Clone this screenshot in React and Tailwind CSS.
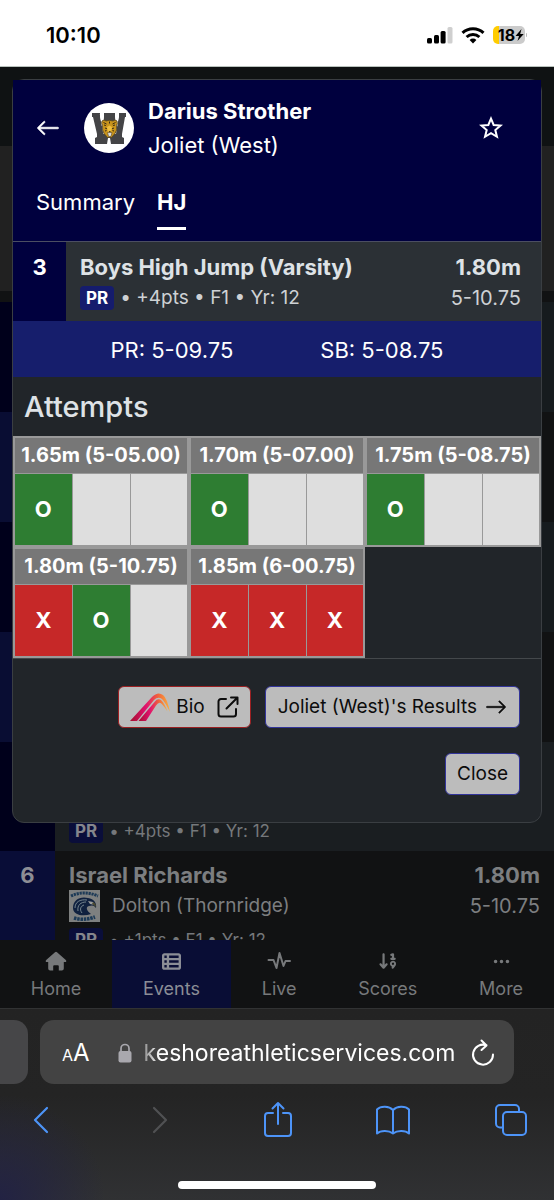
import React from "react";
import { BsArrowLeft, BsArrowRight, BsThreeDots } from "react-icons/bs";
import { FaTableList, FaArrowDown19 } from "react-icons/fa6";

const ATTEMPTS = [
  { height: "1.65m (5-05.00)", marks: ["O", "", ""] },
  { height: "1.70m (5-07.00)", marks: ["O", "", ""] },
  { height: "1.75m (5-08.75)", marks: ["O", "", ""] },
  { height: "1.80m (5-10.75)", marks: ["X", "O", ""] },
  { height: "1.85m (6-00.75)", marks: ["X", "X", "X"] },
];

const MARK_STYLE = {
  O: "bg-[#2e7d32]",
  X: "bg-[#c62828]",
  "": "bg-[#dedede]",
};

function StatusBar() {
  return (
    <header className="flex h-[67px] shrink-0 items-center justify-between border-b border-[#b9c2bd] bg-white pr-[27px] pl-[46px] text-black">
      <time className="pt-1 text-[22px] leading-7 font-semibold">10:10</time>
      <div className="flex items-center gap-2 pt-1">
        <svg width="26" height="18" viewBox="0 0 26 18" aria-label="Signal">
          <rect x="0" y="12" width="5" height="5.5" rx="1.5" />
          <rect x="7" y="9" width="5" height="8.5" rx="1.5" />
          <rect x="13.600" y="5" width="5" height="12.500" rx="1.500" />
          <rect x="20.500" y="1" width="5" height="16.500" rx="1.500" fill="#cfcfcf" />
        </svg>
        <svg width="24" height="18" viewBox="0 0 24 18" aria-label="Wi-Fi">
          <g fill="none" stroke="#000" strokeWidth="3">
            <path d="M1.500 6.800a15.300 15.300 0 0 1 21 0" />
            <path d="M5.600 11a9.400 9.400 0 0 1 12.800 0" />
          </g>
          <path d="M12 17.400l-3.400-3.500a4.900 4.900 0 0 1 6.800 0z" />
        </svg>
        <div className="flex items-center gap-px">
          <div className="flex h-[18px] w-8 items-center justify-center rounded-[5px] bg-[linear-gradient(90deg,#ffcc00_18%,#cbcbcb_18%)] pl-1">
            <span className="text-base leading-[18px] font-bold">18</span>
            <svg width="9" height="12" viewBox="0 0 9 12" aria-hidden="true">
              <path d="M6.500 0L0.500 7h3.500L2.500 12L8.700 5H5.200z" />
            </svg>
          </div>
          <span className="h-1 w-px rounded-r bg-[#bbb]" />
        </div>
      </div>
    </header>
  );
}

function TigerLogo() {
  return (
    <svg width="50" height="50" viewBox="0 0 50 50" className="shrink-0" role="img" aria-label="Joliet West logo">
      <circle cx="25" cy="25" r="25" fill="#fff" />
      <path d="M8 10h8v4l3 14 1-14V10h11v4l1 14 3-14V10h7v4h-1l-3 17v3l2 1v6H27l-1-6h-2l-1 6H11v-6l2-1v-3L9 14H8z" fill="#444446" />
      <path d="M16.300 11l3.500 20M34.500 11l-3 20" stroke="#fff" strokeWidth="1" />
      <path d="M18 18q2-2 4 0 3-1.500 7 0 2-2 4 0 1 3-.5 4.500 1 5-1.500 8l-3.500 4h-4L20 30.500q-2-3-1.500-8Q17 20 18 18z" fill="#c8941c" stroke="#51411f" strokeWidth=".8" />
      <path d="M23 24l2.500-1.500L28 24l-1 6h-3z" fill="#efbf3d" />
      <path d="M19.500 19.500l3 1.500M31.500 19.500l-3 1.500M20 22l2 .5M31 22l-2 .5M21 25l2 .8M30 25l-2 .8M21 28l1.500-.5M30 28l-1.500-.5M25.500 18.500v2" stroke="#3b2d16" strokeWidth="1" />
      <path d="M23.500 29.500h4.500l-1 4h-2.500z" fill="#ddd" stroke="#6d572c" strokeWidth=".7" />
      <path d="M24.500 28h2.500l-1.200 1.300z" fill="#35260f" />
    </svg>
  );
}

function FalconLogo() {
  return (
    <svg width="31" height="32" viewBox="0 0 31 32" className="shrink-0" role="img" aria-label="Thornridge Falcons logo">
      <path fill="#7e8080" d="M0 0h31v32H0z" />
      <path d="M2 6Q15 0 29 6" fill="none" stroke="#1d3a57" strokeWidth="3" strokeDasharray="2.200 .8" />
      <path d="M5 28q10 3 21-1" fill="none" stroke="#1d3a57" strokeWidth="3.500" strokeDasharray="2.500 .8" />
      <path d="M4 18C4 10 11 6 19 8c6 1 9 5 8 10-2-3-4-3-7-2-4 1-2 5 2 8C14 27 4 25 4 18z" fill="#10213f" />
      <path d="M6 18C6 12 11 9 18 10M9 21c-1-6 3-9 8-9M13 23c-3-4-1-7 2-8" fill="none" stroke="#75858e" strokeWidth="1" />
      <path d="M19 11l5 1 2 3-5-1z" fill="#9a9d9e" />
      <path d="M24 12q3 1 3 5l-4-3z" fill="#4b4a32" />
    </svg>
  );
}

function ResultMeta({ points, dim }) {
  return (
    <div className={dim ? "flex items-center text-[#75787b]" : "flex items-center text-[#ced1d4]"}>
      <span
        className={
          dim
            ? "rounded bg-[#0a0e3a] px-1.5 text-[17px] leading-6 font-bold text-[#85868c]"
            : "rounded bg-[#151c6d] px-1.5 text-[17px] leading-6 font-bold text-white"
        }
      >
        PR
      </span>
      <span className={dim ? "pl-1.5 text-[17px] leading-6" : "pl-1.5 text-[19px] leading-6"}>• +{points}pts • F1 • Yr: 12</span>
    </div>
  );
}

function ResultsPage() {
  return (
    <main className="min-h-0 flex-1 overflow-hidden bg-[#111314]">
      <div className="h-[79px] bg-[#0f1213]" />
      <div className="h-[145px] bg-[#212121]" />
      <div className="h-[11px] bg-[#111213]" />
      <ol className="grid">
        {["a", "b", "c", "d"].map((key, i) => (
          <li key={key} className="flex h-[110px]">
            <div className={i % 2 ? "w-[55px] bg-[#090d33]" : "w-[55px] bg-[#00001b]"} />
            <div className={i % 2 ? "flex-1 bg-[#111213]" : "flex-1 bg-[#161b1e]"} />
          </li>
        ))}
        <li className="flex h-[109px]">
          <div className="w-[55px] bg-[#00001b]" />
          <div className="flex flex-1 items-end bg-[#1a1e21] px-3.5 pb-2">
            <ResultMeta points={4} dim />
          </div>
        </li>
        <li className="flex h-[110px]">
          <div className="w-[55px] bg-[#090d37] pt-[9px] text-center text-[22px] leading-[30px] font-bold text-[#8d8e95]">6</div>
          <div className="flex flex-1 items-start justify-between bg-[#111213] px-3.5 pt-[9px] text-[#7c7e80]">
            <div>
              <h3 className="text-[22px] leading-[30px] font-bold">Israel Richards</h3>
              <div className="mb-1.5 flex items-center gap-3">
                <FalconLogo />
                <span className="text-[19px] leading-8">Dolton (Thornridge)</span>
              </div>
              <ResultMeta points={1} dim />
            </div>
            <div className="text-right">
              <div className="text-[22px] leading-[30px] font-bold">1.80m</div>
              <div className="text-xl leading-8">5-10.75</div>
            </div>
          </div>
        </li>
      </ol>
    </main>
  );
}

function AthleteDialog() {
  return (
    <section role="dialog" aria-label="Darius Strother" className="absolute inset-x-3 top-[79px] rounded-xl border border-[#3a3e42] bg-[#212529] text-white">
      <div className="border-b border-[#4b4e62] bg-[#00003e]">
        <div className="flex items-center pt-3.5 pr-[38px] pl-[23px]">
          <button type="button" aria-label="Back" className="flex w-12 shrink-0 items-center">
            <BsArrowLeft size={24} strokeWidth={0.5} />
          </button>
          <TigerLogo />
          <div className="flex-1 pl-3.5">
            <h1 className="text-[22px] leading-[34px] font-bold">Darius Strother</h1>
            <p className="text-[22px] leading-[34px]">Joliet (West)</p>
          </div>
          <button type="button" aria-label="Favorite">
            <svg width="24" height="24" viewBox="0 0 24 24" fill="none" stroke="currentColor" strokeWidth="2" strokeLinejoin="miter">
              <path d="M12 2.600l2.650 6.400 6.900.5-5.250 4.500 1.650 6.750L12 17.100 6.050 20.750 7.700 14 2.450 9.500l6.900-.5z" />
            </svg>
          </button>
        </div>
        <div role="tablist" className="flex items-start gap-[22px] px-[23px] pt-[25px] pb-[11px] text-[22px] leading-[30px]">
          <button type="button" role="tab" aria-selected="false" className="pb-3">
            Summary
          </button>
          <button type="button" role="tab" aria-selected="true" className="border-b-[3px] border-white pb-2.5 font-bold">
            HJ
          </button>
        </div>
      </div>

      <div className="flex bg-[#2b3035] text-[#dee2e6]">
        <div className="w-[53px] bg-[#00003e] pt-2.5 text-center text-[22px] leading-[30px] font-bold text-white">3</div>
        <div className="flex h-[79px] flex-1 justify-between pt-2.5 pr-5 pl-3.5">
          <div>
            <h2 className="mb-1 text-[22px] leading-[30px] font-bold">Boys High Jump (Varsity)</h2>
            <ResultMeta points={4} />
          </div>
          <div className="text-right">
            <div className="text-[22px] leading-[30px] font-bold">1.80m</div>
            <div className="text-xl leading-8 text-[#ced1d4]">5-10.75</div>
          </div>
        </div>
      </div>

      <div className="flex justify-center gap-[87px] bg-[#161e6c] pt-[15px] pb-[13px] text-[22px] leading-7">
        <span>PR: 5-09.75</span>
        <span>SB: 5-08.75</span>
      </div>

      <h2 className="px-[11px] pt-3 pb-[11px] text-[29px] leading-9 font-medium text-[#dee2e6]">Attempts</h2>

      <div className="grid grid-cols-3 border-b border-[#44484b]">
        {ATTEMPTS.map((attempt) => (
          <table key={attempt.height} className="w-full table-fixed border-collapse border-2 border-[#999]">
            <thead>
              <tr>
                <th colSpan={3} className="h-9 border border-[#999] bg-[#777] p-0 text-xl leading-6 font-bold whitespace-nowrap">
                  {attempt.height}
                </th>
              </tr>
            </thead>
            <tbody>
              <tr>
                {attempt.marks.map((mark, i) => (
                  <td key={i} className={"h-[73px] border border-[#999] p-0 text-center text-[22px] leading-7 font-bold " + MARK_STYLE[mark]}>
                    {mark}
                  </td>
                ))}
              </tr>
            </tbody>
          </table>
        ))}
      </div>

      <div className="flex flex-col items-end gap-[25px] pt-[27px] pr-[21px] pb-[27px] text-[19px] leading-6 text-[#0c0c0c]">
        <div className="flex gap-3.5">
          <a href="#bio" className="flex h-[42px] items-center rounded-md border border-[#9b2022] bg-[#bcbcbc] px-[11px]">
            <svg width="42" height="30" viewBox="0 0 42 30" aria-hidden="true">
              <defs>
                <linearGradient id="arch" x1="0" x2="1">
                  <stop offset="0" stopColor="#a30f2d" />
                  <stop offset=".4" stopColor="#e0126f" />
                  <stop offset=".7" stopColor="#f0643c" />
                  <stop offset="1" stopColor="#fbb13c" />
                </linearGradient>
              </defs>
              <path d="M0 29L22 5Q28-1 33 3q4 3 7 17-5-10-8-13-4-3-8 1L7 29z" fill="url(#arch)" />
              <path d="M8.500 29L25 9.500q3-4 6.500-1 3 3 6 11-4.500-7-7-8.500-2-1-4.500 2.500L16 29z" fill="url(#arch)" />
            </svg>
            <span className="pl-1">Bio</span>
            <svg className="ml-3" width="22" height="22" viewBox="0 0 22 22" fill="none" stroke="currentColor" strokeWidth="2" strokeLinecap="round" strokeLinejoin="round" aria-hidden="true">
              <path d="M9 3H4a2.500 2.500 0 0 0-2.500 2.500V18A2.500 2.500 0 0 0 4 20.500h12.500A2.500 2.500 0 0 0 19 18v-5M14 1.500h6.500V8M20.500 1.500L9.500 12.500" />
            </svg>
          </a>
          <a href="#results" className="flex h-[42px] items-center gap-2 rounded-md border border-[#32349a] bg-[#bcbcbc] px-3">
            Joliet (West)'s Results
            <BsArrowRight size={22} strokeWidth={0.4} />
          </a>
        </div>
        <button type="button" className="h-[42px] rounded-md border border-[#32349a] bg-[#bcbcbc] px-[11px]">
          Close
        </button>
      </div>
    </section>
  );
}

function HomeIcon() {
  return (
    <svg width="22" height="20" viewBox="0 0 22 20" fill="currentColor" aria-hidden="true">
      <path d="M10 1.300a1.500 1.500 0 0 1 2 0l8.800 7.600c1 .9.500 2.100-.7 2.100h-1.300v6.500a2 2 0 0 1-2 2h-3v-4.300a1 1 0 0 0-1-1H9.200a1 1 0 0 0-1 1v4.300h-3a2 2 0 0 1-2-2V11H1.900C.7 11 .2 9.800 1.200 8.900z" />
    </svg>
  );
}

function PulseIcon() {
  return (
    <svg width="24" height="20" viewBox="0 0 24 20" fill="none" stroke="currentColor" strokeWidth="2" strokeLinejoin="round" strokeLinecap="round" aria-hidden="true">
      <path d="M1.500 9h5l3 8L12.500 2l4 13 2-5H23" />
    </svg>
  );
}

const NAV = [
  { label: "Home", icon: <HomeIcon /> },
  { label: "Events", icon: <FaTableList size={19} />, active: true },
  { label: "Live", icon: <PulseIcon /> },
  { label: "Scores", icon: <FaArrowDown19 size={20} /> },
  { label: "More", icon: <BsThreeDots size={19} /> },
];

function TabBar() {
  return (
    <nav className="flex h-[68px] shrink-0 bg-[#111213] text-[#77797b]">
      {NAV.map((item) => (
        <a
          key={item.label}
          href="#nav"
          className={
            item.active
              ? "flex flex-auto flex-col items-center gap-1.5 bg-[#090d35] pt-[11px] text-[#8b8d96]"
              : "flex flex-auto flex-col items-center gap-1.5 pt-[11px]"
          }
        >
          <span className="flex h-5 items-center">{item.icon}</span>
          <span className="text-lg leading-6">{item.label}</span>
        </a>
      ))}
    </nav>
  );
}

function BrowserBar() {
  return (
    <footer className="shrink-0 border-t border-[#313233] bg-[radial-gradient(circle_at_0%_100%,#222243_0%,#22224300_18%),linear-gradient(#232323_0%,#242424_45%,#303133_100%)]">
      <div className="flex gap-3 pt-[11px] pr-10">
        <div className="h-16 w-7 shrink-0 rounded-r-[14px] bg-[#464648]" />
        <div className="flex h-16 min-w-0 flex-1 items-center rounded-[14px] bg-[#434343] pt-0.5 pr-[19px] pl-[22px] text-white">
          <button type="button" aria-label="Page settings" className="flex items-baseline leading-8">
            <span className="text-base">A</span>
            <span className="text-2xl leading-8">A</span>
          </button>
          <svg className="ml-7 shrink-0" width="14" height="20" viewBox="0 0 14 20" aria-hidden="true">
            <rect x=".5" y="8" width="13" height="11.500" rx="2" fill="#a9a8ae" />
            <path d="M3 9V5.500a4 4 0 0 1 8 0V9" fill="none" stroke="#a9a8ae" strokeWidth="1.700" />
          </svg>
          <input
            type="text"
            aria-label="Address"
            readOnly
            value="keshoreathleticservices.com"
            className="ml-3 min-w-0 flex-1 bg-transparent [mask-image:linear-gradient(90deg,#0006,#000_16px)] text-[23px] leading-8 outline-none"
          />
          <button type="button" aria-label="Reload" className="ml-2">
            <svg width="24" height="28" viewBox="0 0 24 28" fill="none" stroke="currentColor" strokeWidth="2" strokeLinecap="round" strokeLinejoin="round">
              <path d="M15.500 6.300A10 10 0 1 0 22 15.500M10.500 1.500l5 5-5 4.500" />
            </svg>
          </button>
        </div>
      </div>
      <div className="flex items-center justify-between pt-[17px] pr-[26px] pl-[33px] text-[#4d94f8]">
        <button type="button" aria-label="Back">
          <svg width="16" height="38" viewBox="0 0 16 38" fill="none" stroke="currentColor" strokeWidth="2.200" strokeLinecap="round" strokeLinejoin="round">
            <path d="M14 7L2 19l12 12" />
          </svg>
        </button>
        <button type="button" aria-label="Forward" className="ml-5 text-[#505153]">
          <svg width="16" height="38" viewBox="0 0 16 38" fill="none" stroke="currentColor" strokeWidth="2.200" strokeLinecap="round" strokeLinejoin="round">
            <path d="M2 7l12 12L2 31" />
          </svg>
        </button>
        <button type="button" aria-label="Share" className="ml-3">
          <svg width="28" height="38" viewBox="0 0 28 38" fill="none" stroke="currentColor" strokeWidth="2" strokeLinecap="round" strokeLinejoin="round">
            <path d="M9 12H4a3 3 0 0 0-3 3v17a3 3 0 0 0 3 3h20a3 3 0 0 0 3-3V15a3 3 0 0 0-3-3h-5M14 23V2M8.500 7.500L14 2l5.500 5.500" />
          </svg>
        </button>
        <button type="button" aria-label="Bookmarks">
          <svg width="36" height="38" viewBox="0 0 36 38" fill="none" stroke="currentColor" strokeWidth="2" strokeLinejoin="round">
            <path d="M18 9C14 5 6 4.500 2 8.500v24c4-3.500 12-3 16 0 4-3 12-3.500 16 0v-24C30 4.500 22 5 18 9zM18 9v23.500" />
          </svg>
        </button>
        <button type="button" aria-label="Tabs">
          <svg width="34" height="38" viewBox="0 0 34 38" fill="none" stroke="currentColor" strokeWidth="2" strokeLinejoin="round">
            <rect x="9" y="11" width="23" height="23" rx="4" />
            <path d="M9 26.500H6a4 4 0 0 1-4-4V8a4 4 0 0 1 4-4h15a4 4 0 0 1 4 4v3" />
          </svg>
        </button>
      </div>
      <div className="flex justify-center pt-[42px] pb-[11px]">
        <div className="h-2 w-[198px] rounded-full bg-white" />
      </div>
    </footer>
  );
}

export default function App() {
  return (
    <div className="relative flex h-screen flex-col overflow-hidden bg-[#111213] font-[Inter,'Liberation_Sans',sans-serif]">
      <StatusBar />
      <ResultsPage />
      <TabBar />
      <BrowserBar />
      <AthleteDialog />
    </div>
  );
}
